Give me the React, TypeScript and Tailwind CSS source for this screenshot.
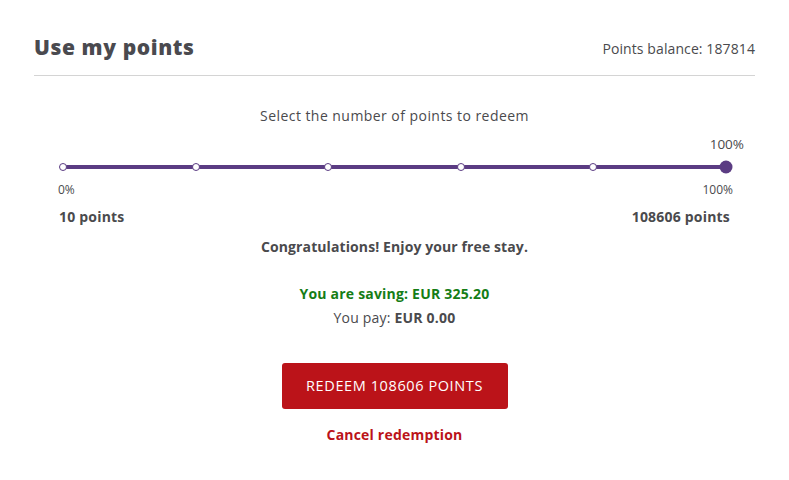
import React from "react";

const stops = [0, 20, 40, 60, 80];

export default function App() {
  return (
    <div className="w-[789px] h-[480px] bg-white px-[34px] pt-[34px] text-[#4a4a4d]" style={{ fontFamily: "'Open Sans', 'Noto Sans', sans-serif" }}>
      <div className="flex items-center justify-between h-[28px]">
        <h1 className="text-[21px] font-extrabold text-[#4a4a4f] tracking-[0.6px]">Use my points</h1>
        <span className="text-[14px] tracking-[0.1px]">Points balance: 187814</span>
      </div>
      <div className="mt-[13px] border-b border-[#d4d4d4]" />

      <div className="mt-[31px] text-center text-[14px] leading-[18px] tracking-[0.45px]">Select the number of points to redeem</div>

      <div className="px-[29px]">
        <div className="mt-[10px] flex justify-end">
          <span className="text-[13.5px] leading-[18px] translate-x-[18px]">100%</span>
        </div>
        <div className="relative mt-[12px] h-[4px] bg-[#5b3c83] rounded-full">
          {stops.map((s) => (
            <span
              key={s}
              className="absolute top-1/2 -translate-y-1/2 -translate-x-1/2 w-[8px] h-[8px] rounded-full bg-white border-[1.5px] border-[#5b3c83]"
              style={{ left: `${s}%` }}
            />
          ))}
          <span className="absolute top-1/2 right-0 -translate-y-1/2 translate-x-1/2 w-[13px] h-[13px] rounded-full bg-[#5b3c83]" />
        </div>
        <div className="mt-[13px] flex justify-between text-[12px] leading-[16px] -mx-[5px]">
          <span>0%</span>
          <span className="translate-x-[2px]">100%</span>
        </div>
        <div className="mt-[10px] flex justify-between text-[14px] font-bold leading-[18px] -mx-[4px] tracking-[0.2px]">
          <span>10 points</span>
          <span>108606 points</span>
        </div>
      </div>

      <div className="mt-[12px] text-center text-[14px] font-bold leading-[18px] tracking-[0.1px]">Congratulations! Enjoy your free stay.</div>

      <div className="mt-[29px] text-center text-[14px] font-bold leading-[18px] text-[#157d16] tracking-[0.2px]">You are saving: EUR 325.20</div>
      <div className="mt-[6px] text-center text-[14px] leading-[18px] tracking-[0.2px]">
        You pay: <span className="font-bold">EUR 0.00</span>
      </div>

      <div className="mt-[36px] flex justify-center">
        <button className="w-[226px] h-[46px] rounded-[3px] bg-[#bb1319] text-white text-[14.5px] tracking-[0.6px]">
          REDEEM 108606 POINTS
        </button>
      </div>
      <div className="mt-[13px] text-center">
        <button className="text-[14px] font-bold text-[#bb1319] leading-[18px] tracking-[0.2px]">Cancel redemption</button>
      </div>
    </div>
  );
}
